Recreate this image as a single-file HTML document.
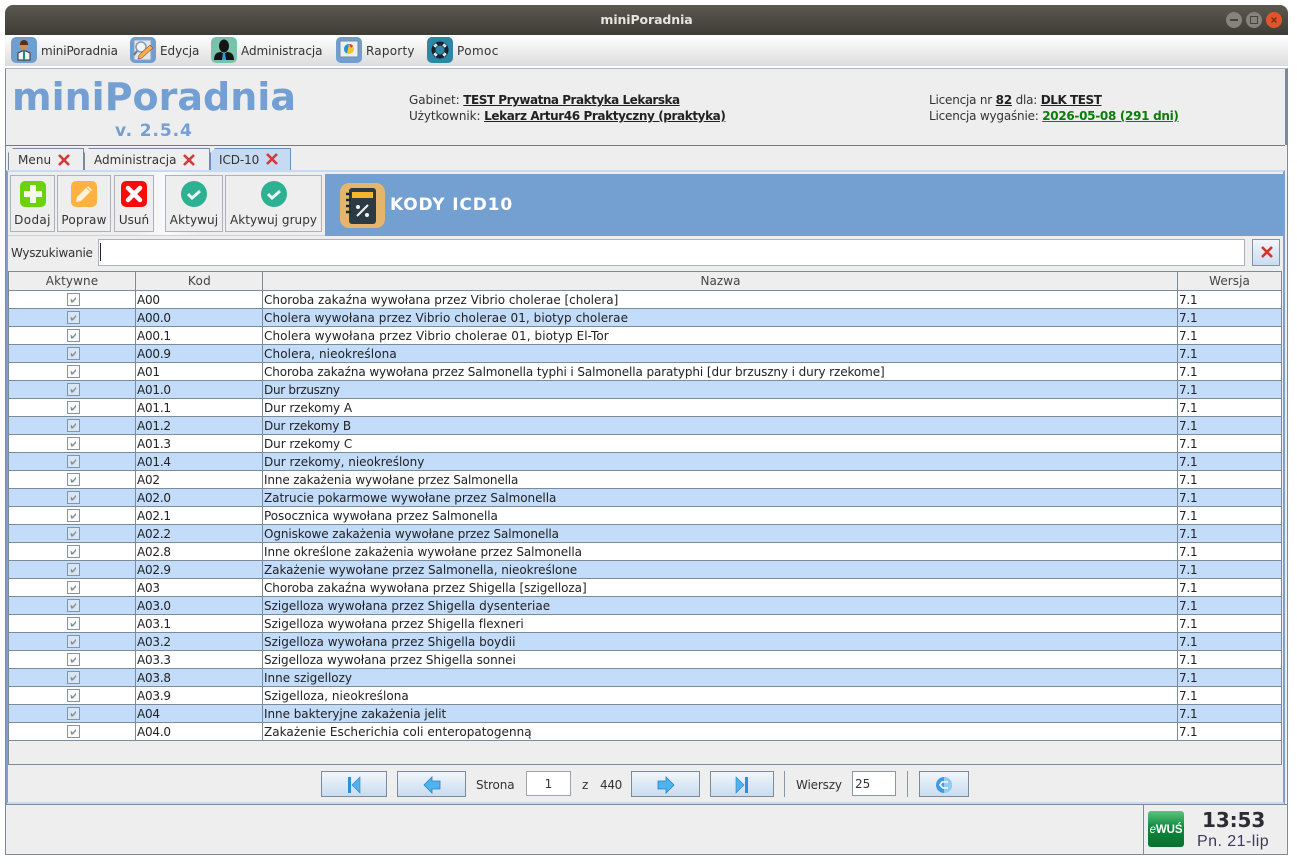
<!DOCTYPE html>
<html lang="pl"><head><meta charset="utf-8"><title>miniPoradnia</title>
<style>
html,body{margin:0;padding:0;background:#fff}
body{width:1297px;height:865px;overflow:hidden;position:relative;font-family:"DejaVu Sans","Liberation Sans",sans-serif;font-size:12px;color:#333}
.a{position:absolute;white-space:nowrap}
.bx{position:absolute;box-sizing:border-box}
.t{position:absolute;white-space:nowrap;line-height:16px;letter-spacing:-.15px}
.mi{position:absolute;top:37px;width:26px;height:26px;border-radius:5px}
.btn{position:absolute;top:175px;height:57px;box-sizing:border-box;border:1px solid #a9b3bf;background:#eee;text-align:center;color:#333}
.btn span{position:absolute;left:-3px;right:-3px;top:36px;line-height:16px}
.btn svg{position:absolute;top:5px;left:50%;margin-left:-13px}
.tab{position:absolute;top:148px;height:22px;box-sizing:border-box;border:1px solid #7a8a9c;border-bottom:0;background:#eee;line-height:22px;clip-path:polygon(5px 0,100% 0,100% 100%,0 100%,0 5px)}
.x{position:absolute;top:4px}
.r{position:absolute;left:9px;width:1272px;height:18px;box-sizing:border-box;border-bottom:1px solid #7d8a9a;line-height:19px;color:#222;background-image:linear-gradient(#7d8a9a,#7d8a9a),linear-gradient(#7d8a9a,#7d8a9a),linear-gradient(#7d8a9a,#7d8a9a);background-size:1px 100%;background-repeat:no-repeat;background-position:126px 0,253px 0,1168px 0}
.r.o{background-color:#fff}.r.e{background-color:#c2dcfa}
.r.o svg{fill:#fafafa}.r.e svg{fill:#d7e6f5}
.r b{font-weight:normal;position:absolute;top:0;white-space:nowrap;letter-spacing:-.22px}
.r b.k{left:128px}.r b.n{left:255px}.r b.w{left:1170px}
.r svg{position:absolute;left:58px;top:2px}
.h{position:absolute;top:271px;height:20px;box-sizing:border-box;border:1px solid #7d8a9a;background:#eee;text-align:center;line-height:19px;color:#444;letter-spacing:.05px}
.pb{position:absolute;top:771px;height:26px;box-sizing:border-box;border:1px solid #7d8a9a;background:linear-gradient(#f1f6fb,#c9dcef)}
.pb svg{position:absolute;left:50%;top:3px;margin-left:-9px}
.u{font-weight:bold;text-decoration:underline;color:#222;letter-spacing:-.42px}
</style></head><body>
<svg width="0" height="0" style="position:absolute"><symbol id="c" viewBox="0 0 14 14"><rect x=".5" y=".5" width="12" height="12" stroke="#8493a5"/><path d="M3.500 6.200l1.500 0 .5 1.500 3.500-4v2.300l-3 3.500h-2z" fill="#8a8f96"/></symbol></svg>

<!-- title bar -->
<div class="bx" style="left:5px;top:5px;width:1283px;height:30px;border-radius:8px 8px 0 0;background:linear-gradient(#5c5850,#3e3c36)"></div>
<div class="a" style="left:5px;width:1283px;top:12px;text-align:center;color:#e6e4df;font-weight:bold;font-size:12.5px;line-height:16px;letter-spacing:-.1px">miniPoradnia</div>
<div class="bx" style="left:1226px;top:12px;width:16px;height:16px;border-radius:50%;background:#85837c"><div class="bx" style="left:4px;top:7px;width:8px;height:2px;background:#45433d"></div></div>
<div class="bx" style="left:1246px;top:12px;width:16px;height:16px;border-radius:50%;background:#85837c"><div class="bx" style="left:4px;top:4px;width:8px;height:8px;border:1px solid #45433d"></div></div>
<div class="bx" style="left:1266px;top:12px;width:16px;height:16px;border-radius:50%;background:#e2552a"><svg width="16" height="16" style="position:absolute;left:0;top:0"><path d="M5.500 5.500l5 5M10.500 5.500l-5 5" stroke="#7b2c12" stroke-width="1.400"/></svg></div>

<!-- menu bar -->
<div class="bx" style="left:5px;top:35px;width:1283px;height:31px;background:linear-gradient(#fff,#dcdcdc)"></div>

<div class="mi" style="left:11px;background:#6f9ed1"><svg width="26" height="26"><path d="M7 23v-7l4-2h4l4 2v7z" fill="#f2f2f2" stroke="#333"/><circle cx="13" cy="9" r="4" fill="#c98d5e"/><path d="M9 8q0-5 4-5t4 5z" fill="#5c2e16"/><path d="M12 14h2v9h-2z" fill="#1c8b7a"/></svg></div>
<div class="t" style="left:41px;top:43px;letter-spacing:-.12px">miniPoradnia</div>
<div class="mi" style="left:130px;background:#6f9ed1"><svg width="26" height="26"><rect x="4" y="3" width="17" height="20" fill="#dfe6ee" stroke="#8fa3b8"/><circle cx="11" cy="10" r="5" fill="#eef6ff" stroke="#8b9aa8" stroke-width="1.500"/><path d="M7 14l-3 4" stroke="#777" stroke-width="2"/><path d="M8 22l1-4 11-10 3 3-11 10z" fill="#efb23c" stroke="#915" stroke-width=".5"/></svg></div>
<div class="t" style="left:160px;top:43px;letter-spacing:-.05px">Edycja</div>
<div class="mi" style="left:211px;background:#76c2aa"><svg width="26" height="26"><ellipse cx="13" cy="9" rx="5" ry="6.500" fill="#141414"/><path d="M3 23q0-8 7-8l3 2 3-2q7 0 7 8z" fill="#141414"/><path d="M12 16h2l1 7h-4z" fill="#2b9fe0"/></svg></div>
<div class="t" style="left:241px;top:43px;letter-spacing:-.05px">Administracja</div>
<div class="mi" style="left:336px;background:#6f9ed1"><svg width="26" height="26"><rect x="4" y="4" width="18" height="16" fill="#e9eff6" stroke="#7d8a9a"/><circle cx="13" cy="12" r="5" fill="#f3c62f"/><path d="M13 7a5 5 0 0 0-2 9.600z" fill="#2b8fd8"/><path d="M13 7l2 4 2-2q-1-2-4-2z" fill="#d8402f"/></svg></div>
<div class="t" style="left:366px;top:43px;letter-spacing:.23px">Raporty</div>
<div class="mi" style="left:427px;background:#2d86a6"><svg width="26" height="26"><circle cx="13" cy="13" r="6.500" fill="none" stroke="#16242c" stroke-width="4"/><path d="M7.500 7.500l2 2M18.500 7.500l-2 2M7.500 18.500l2-2M18.500 18.500l-2-2" stroke="#dfe7ea" stroke-width="3.500"/></svg></div>
<div class="t" style="left:457px;top:43px;letter-spacing:.4px">Pomoc</div>

<!-- content frame -->
<div class="bx" style="left:5px;top:68px;width:1283px;height:787px;border:1px solid #7d8a9a;border-top-color:#a9b6c4;background:#eee"></div>
<div class="bx" style="left:6px;top:145px;width:1279px;height:1px;background:#7b7b7b"></div>
<div class="bx" style="left:1285px;top:69px;width:2px;height:76px;background:#7d8a9a"></div>

<!-- header -->
<div class="a" style="left:12px;top:74px;font-size:38px;line-height:46px;font-weight:bold;color:#739fd3;letter-spacing:0">miniPoradnia</div>
<div class="a" style="left:115px;top:121px;font-size:17px;line-height:20px;font-weight:bold;color:#739fd3;letter-spacing:.9px">v. 2.5.4</div>
<div class="t" style="left:409px;top:92px;letter-spacing:-.1px">Gabinet: <span class="u" style="letter-spacing:-.48px">TEST Prywatna Praktyka Lekarska</span></div>
<div class="t" style="left:409px;top:108px;letter-spacing:-.1px">Użytkownik: <span class="u" style="letter-spacing:-.39px">Lekarz Artur46 Praktyczny (praktyka)</span></div>
<div class="t" style="left:929px;top:92px;letter-spacing:-.2px">Licencja nr <span class="u" style="letter-spacing:-.2px">82</span> dla: <span class="u" style="letter-spacing:-.45px">DLK TEST</span></div>
<div class="t" style="left:929px;top:108px;letter-spacing:-.2px">Licencja wygaśnie: <span class="u" style="color:#0a7d0a;letter-spacing:-.3px">2026-05-08 (291 dni)</span></div>

<!-- tabs -->
<div class="tab" style="left:8px;width:76px;padding-left:9px;letter-spacing:.05px">Menu<svg class="x" style="left:48px;top:4px" width="14" height="14"><path d="M2 2l10 10M12 2L2 12" stroke="#d23a3a" stroke-width="2.600"/></svg></div>
<div class="tab" style="left:84px;width:126px;padding-left:9px;letter-spacing:.03px">Administracja<svg class="x" style="left:97px" width="14" height="14"><path d="M2 2l10 10M12 2L2 12" stroke="#d23a3a" stroke-width="2.600"/></svg></div>
<div class="tab" style="left:210px;width:81px;padding-left:8px;background:#c6dbf1;border-color:#6a8fc0;height:24px;letter-spacing:-.1px">ICD-10<svg class="x" style="left:54px;top:3px" width="14" height="14"><path d="M2 2l10 10M12 2L2 12" stroke="#d23a3a" stroke-width="2.600"/></svg></div>

<!-- tab content frame -->
<div class="bx" style="left:6px;top:170px;width:1279px;height:635px;border:2px solid #c6dbf1;border-left-color:#7c9fd0;border-right-color:#7c9fd0;border-bottom:3px solid #c6dbf1;background:#eee"></div>
<div class="bx" style="left:6px;top:804px;width:1281px;height:1px;background:#7d8a9a"></div>

<!-- toolbar -->
<div class="bx" style="left:8px;top:172px;width:317px;height:63px;background:linear-gradient(90deg,#eee 40%,#fafafa 50%,#eee 60%)"></div>
<div class="bx" style="left:8px;top:235px;width:1275px;height:1px;background:#d2d2d2"></div>
<div class="btn" style="left:10px;width:45px"><svg width="26" height="26"><rect width="26" height="26" rx="5" fill="#6cd10f"/><path d="M10 4h6v6h6v6h-6v6h-6v-6H4v-6h6z" fill="#f4f8ea"/></svg><span style="letter-spacing:.35px">Dodaj</span></div>
<div class="btn" style="left:57px;width:54px"><svg width="26" height="26"><rect width="26" height="26" rx="5" fill="#ffb142"/><path d="M5 21l1-5L17 5l4 4-11 11z" fill="#fff3dd"/><path d="M15.500 6.500l4 4" stroke="#ffb142"/></svg><span style="letter-spacing:.25px">Popraw</span></div>
<div class="btn" style="left:114px;width:40px"><svg width="26" height="26"><rect width="26" height="26" rx="5" fill="#fb0a0a"/><path d="M7 7l12 12M19 7L7 19" stroke="#fff" stroke-width="4.500" stroke-linecap="round"/></svg><span>Usuń</span></div>
<div class="btn" style="left:165px;width:58px"><svg width="26" height="26"><circle cx="13" cy="13" r="13" fill="#2eb092"/><path d="M7 13l4 4 8-7" fill="none" stroke="#eef9f5" stroke-width="3"/></svg><span style="letter-spacing:.1px">Aktywuj</span></div>
<div class="btn" style="left:225px;width:97px"><svg width="26" height="26"><circle cx="13" cy="13" r="13" fill="#2eb092"/><path d="M7 13l4 4 8-7" fill="none" stroke="#eef9f5" stroke-width="3"/></svg><span style="letter-spacing:.05px">Aktywuj grupy</span></div>

<div class="bx" style="left:325px;top:174px;width:958px;height:62px;background:#739fd1"></div>
<svg class="a" style="left:340px;top:183px" width="45" height="45"><rect width="45" height="45" rx="9" fill="#e6b56c"/><rect x="9" y="5" width="27" height="36" rx="3" fill="#2c3a44"/><rect x="12" y="9" width="21" height="6" fill="#f7b42c"/><path d="M6 11h5M6 17h5M6 23h5M6 29h5" stroke="#1c2830" stroke-width="2.500"/><path d="M17 33l11-11" stroke="#f2f2f2" stroke-width="2"/><circle cx="18" cy="24" r="2" fill="#f2f2f2"/><circle cx="27" cy="32" r="2" fill="#f2f2f2"/></svg>
<div class="a" style="left:390px;top:194px;font-size:17px;line-height:22px;font-weight:bold;color:#fff;letter-spacing:.85px">KODY ICD10</div>

<!-- search -->
<div class="t" style="left:11px;top:245px;letter-spacing:-.25px">Wyszukiwanie</div>
<div class="bx" style="left:98px;top:239px;width:1147px;height:27px;border:1px solid #a9b3bf;background:#fff"></div>
<div class="bx" style="left:100px;top:243px;width:1px;height:18px;background:#222"></div>
<div class="bx" style="left:1252px;top:239px;width:28px;height:27px;border:1px solid #8494a6;background:linear-gradient(#f1f6fb,#c9dcef)"><svg width="26" height="25" style="position:absolute;left:1px;top:0"><path d="M8 7l10 10M18 7L8 17" stroke="#d8342e" stroke-width="2.600"/></svg></div>

<!-- table frame -->
<div class="bx" style="left:8px;top:271px;width:1274px;height:494px;border:1px solid #7d8a9a;background:#eee"></div>
<div class="h" style="left:8px;width:128px;letter-spacing:.1px">Aktywne</div>
<div class="h" style="left:135px;width:128px;padding-left:1px;letter-spacing:.3px">Kod</div>
<div class="h" style="left:262px;width:916px;padding-left:1px">Nazwa</div>
<div class="h" style="left:1177px;width:105px">Wersja</div>

<div class="r o" style="top:291px"><svg width="14" height="14"><use href="#c"/></svg><b class="k">A00</b><b class="n" style="letter-spacing:-.01px">Choroba zakaźna wywołana przez Vibrio cholerae [cholera]</b><b class="w">7.1</b></div>
<div class="r e" style="top:309px"><svg width="14" height="14"><use href="#c"/></svg><b class="k">A00.0</b><b class="n" style="letter-spacing:.06px">Cholera wywołana przez Vibrio cholerae 01, biotyp cholerae</b><b class="w">7.1</b></div>
<div class="r o" style="top:327px"><svg width="14" height="14"><use href="#c"/></svg><b class="k">A00.1</b><b class="n" style="letter-spacing:.08px">Cholera wywołana przez Vibrio cholerae 01, biotyp El-Tor</b><b class="w">7.1</b></div>
<div class="r e" style="top:345px"><svg width="14" height="14"><use href="#c"/></svg><b class="k">A00.9</b><b class="n" style="letter-spacing:.11px">Cholera, nieokreślona</b><b class="w">7.1</b></div>
<div class="r o" style="top:363px"><svg width="14" height="14"><use href="#c"/></svg><b class="k">A01</b><b class="n" style="letter-spacing:-.1px">Choroba zakaźna wywołana przez Salmonella typhi i Salmonella paratyphi [dur brzuszny i dury rzekome]</b><b class="w">7.1</b></div>
<div class="r e" style="top:381px"><svg width="14" height="14"><use href="#c"/></svg><b class="k">A01.0</b><b class="n" style="letter-spacing:-.3px">Dur brzuszny</b><b class="w">7.1</b></div>
<div class="r o" style="top:399px"><svg width="14" height="14"><use href="#c"/></svg><b class="k">A01.1</b><b class="n" style="letter-spacing:-.07px">Dur rzekomy A</b><b class="w">7.1</b></div>
<div class="r e" style="top:417px"><svg width="14" height="14"><use href="#c"/></svg><b class="k">A01.2</b><b class="n" style="letter-spacing:-.15px">Dur rzekomy B</b><b class="w">7.1</b></div>
<div class="r o" style="top:435px"><svg width="14" height="14"><use href="#c"/></svg><b class="k">A01.3</b><b class="n" style="letter-spacing:-.07px">Dur rzekomy C</b><b class="w">7.1</b></div>
<div class="r e" style="top:453px"><svg width="14" height="14"><use href="#c"/></svg><b class="k">A01.4</b><b class="n" style="letter-spacing:-.02px">Dur rzekomy, nieokreślony</b><b class="w">7.1</b></div>
<div class="r o" style="top:471px"><svg width="14" height="14"><use href="#c"/></svg><b class="k">A02</b><b class="n" style="letter-spacing:-.14px">Inne zakażenia wywołane przez Salmonella</b><b class="w">7.1</b></div>
<div class="r e" style="top:489px"><svg width="14" height="14"><use href="#c"/></svg><b class="k">A02.0</b><b class="n" style="letter-spacing:-.04px">Zatrucie pokarmowe wywołane przez Salmonella</b><b class="w">7.1</b></div>
<div class="r o" style="top:507px"><svg width="14" height="14"><use href="#c"/></svg><b class="k">A02.1</b><b class="n" style="letter-spacing:-.05px">Posocznica wywołana przez Salmonella</b><b class="w">7.1</b></div>
<div class="r e" style="top:525px"><svg width="14" height="14"><use href="#c"/></svg><b class="k">A02.2</b><b class="n" style="letter-spacing:-.09px">Ogniskowe zakażenia wywołane przez Salmonella</b><b class="w">7.1</b></div>
<div class="r o" style="top:543px"><svg width="14" height="14"><use href="#c"/></svg><b class="k">A02.8</b><b class="n" style="letter-spacing:-.08px">Inne określone zakażenia wywołane przez Salmonella</b><b class="w">7.1</b></div>
<div class="r e" style="top:561px"><svg width="14" height="14"><use href="#c"/></svg><b class="k">A02.9</b><b class="n" style="letter-spacing:-.06px">Zakażenie wywołane przez Salmonella, nieokreślone</b><b class="w">7.1</b></div>
<div class="r o" style="top:579px"><svg width="14" height="14"><use href="#c"/></svg><b class="k">A03</b><b class="n" style="letter-spacing:-.07px">Choroba zakaźna wywołana przez Shigella [szigelloza]</b><b class="w">7.1</b></div>
<div class="r e" style="top:597px"><svg width="14" height="14"><use href="#c"/></svg><b class="k">A03.0</b><b class="n" style="letter-spacing:0">Szigelloza wywołana przez Shigella dysenteriae</b><b class="w">7.1</b></div>
<div class="r o" style="top:615px"><svg width="14" height="14"><use href="#c"/></svg><b class="k">A03.1</b><b class="n" style="letter-spacing:-.01px">Szigelloza wywołana przez Shigella flexneri</b><b class="w">7.1</b></div>
<div class="r e" style="top:633px"><svg width="14" height="14"><use href="#c"/></svg><b class="k">A03.2</b><b class="n" style="letter-spacing:0">Szigelloza wywołana przez Shigella boydii</b><b class="w">7.1</b></div>
<div class="r o" style="top:651px"><svg width="14" height="14"><use href="#c"/></svg><b class="k">A03.3</b><b class="n" style="letter-spacing:-.07px">Szigelloza wywołana przez Shigella sonnei</b><b class="w">7.1</b></div>
<div class="r e" style="top:669px"><svg width="14" height="14"><use href="#c"/></svg><b class="k">A03.8</b><b class="n" style="letter-spacing:-.02px">Inne szigellozy</b><b class="w">7.1</b></div>
<div class="r o" style="top:687px"><svg width="14" height="14"><use href="#c"/></svg><b class="k">A03.9</b><b class="n" style="letter-spacing:.03px">Szigelloza, nieokreślona</b><b class="w">7.1</b></div>
<div class="r e" style="top:705px"><svg width="14" height="14"><use href="#c"/></svg><b class="k">A04</b><b class="n" style="letter-spacing:-.05px">Inne bakteryjne zakażenia jelit</b><b class="w">7.1</b></div>
<div class="r o" style="top:723px"><svg width="14" height="14"><use href="#c"/></svg><b class="k">A04.0</b><b class="n" style="letter-spacing:.04px">Zakażenie Escherichia coli enteropatogenną</b><b class="w">7.1</b></div>

<!-- pagination -->
<div class="pb" style="left:321px;width:66px"><svg width="18" height="20"><rect x="3" y="2" width="3" height="16" fill="#2f8fd8"/><path d="M15 2v16L7 10z" fill="#4fb4ee" stroke="#2a7fc4" stroke-width=".6"/></svg></div>
<div class="pb" style="left:397px;width:69px"><svg width="18" height="20"><path d="M1 10l8-8v4h8v8H9v4z" fill="#4fb4ee" stroke="#2a7fc4" stroke-width=".8"/></svg></div>
<div class="t" style="left:476px;top:777px">Strona</div>
<div class="bx" style="left:526px;top:771px;width:45px;height:25px;border:1px solid #9aa5b2;background:#fff;text-align:center;line-height:25px;color:#333">1</div>
<div class="t" style="left:582px;top:777px">z</div>
<div class="t" style="left:600px;top:777px;letter-spacing:-.3px">440</div>
<div class="pb" style="left:631px;width:69px"><svg width="18" height="20"><path d="M17 10l-8-8v4H1v8h8v4z" fill="#4fb4ee" stroke="#2a7fc4" stroke-width=".8"/></svg></div>
<div class="pb" style="left:710px;width:64px"><svg width="18" height="20"><path d="M3 2v16l8-8z" fill="#4fb4ee" stroke="#2a7fc4" stroke-width=".6"/><rect x="12" y="2" width="3" height="16" fill="#2f8fd8"/></svg></div>
<div class="bx" style="left:784px;top:771px;width:1px;height:26px;background:#8a97a6"></div>
<div class="t" style="left:796px;top:777px">Wierszy</div>
<div class="bx" style="left:852px;top:771px;width:44px;height:25px;border:1px solid #8a97a6;background:#fff;line-height:25px;padding-left:2px;color:#333">25</div>
<div class="bx" style="left:907px;top:771px;width:1px;height:26px;background:#8a97a6"></div>
<div class="pb" style="left:919px;width:50px"><svg width="18" height="20"><circle cx="9" cy="10" r="8" fill="#3f9ade"/><path d="M9 2a8 8 0 0 1 0 16z" fill="#8fcdf2"/><path d="M13 7H7l-2 3 3 3h5" fill="none" stroke="#e6f4ff" stroke-width="1.800"/></svg></div>

<!-- status bar -->
<div class="bx" style="left:1143px;top:805px;width:1px;height:50px;background:#7d8a9a"></div>
<div class="bx" style="left:1148px;top:811px;width:36px;height:36px;border-radius:3px;background:linear-gradient(#5cc47f,#0f8a3c 45%,#08702f)"></div>
<div class="a" style="left:1148px;top:812px;width:36px;height:36px;text-align:center;color:#fff;font:bold 11.500px/36px 'Liberation Sans',sans-serif;letter-spacing:-.1px"><i style="font-weight:normal">e</i>WUŚ</div>
<div class="a" style="left:1202px;top:808px;font:bold 20px/24px 'DejaVu Sans',sans-serif;color:#2c2c34;letter-spacing:-.1px">13:53</div>
<div class="a" style="left:1197px;top:832px;font:16px/20px 'Liberation Sans',sans-serif;color:#3e3a5e;letter-spacing:.45px">Pn. 21-lip</div>

</body></html>
